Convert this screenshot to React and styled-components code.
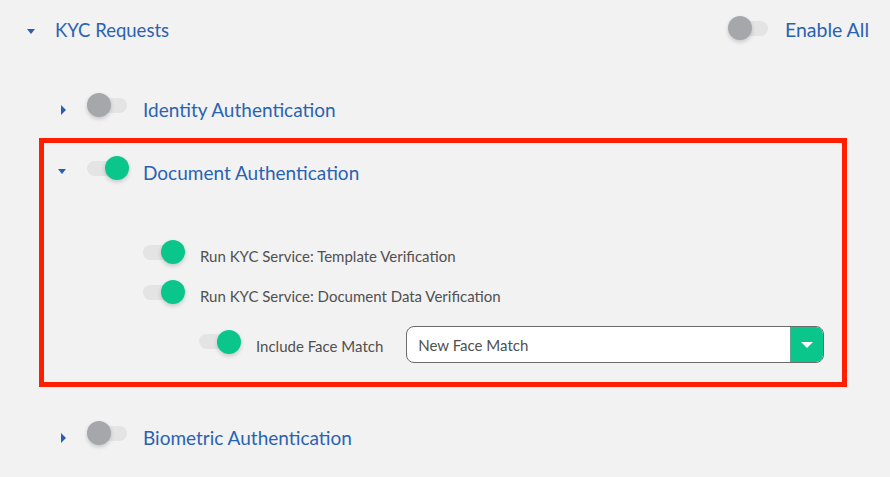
import React from "react";
import styled, { createGlobalStyle } from "styled-components";

const Global = createGlobalStyle`
  html, body { margin: 0; padding: 0; background: #f2f2f2; }
  body { font-family: Lato, "Noto Sans", sans-serif; -webkit-font-smoothing: antialiased; }
`;

const Page = styled.div`
  width: 890px;
  height: 477px;
  background: #f2f2f2;
  display: flex;
  flex-direction: column;
  overflow: hidden;
`;

const Header = styled.div`
  height: 62px;
  margin-bottom: 16px;
  display: flex;
  align-items: center;
  padding: 0 21px 0 27px;
`;

const HeaderTitle = styled.div`
  display: flex;
  align-items: center;
  gap: 20px;
  flex: 1;
`;

const Title = styled.span`
  font-size: ${(p) => p.$size || 19}px;
  color: #2a62b3;
  line-height: 1;
  margin-top: ${(p) => (p.$header ? -2 : 2)}px;
  white-space: nowrap;
`;

const EnableAll = styled.div`
  display: flex;
  align-items: center;
  gap: 17px;
`;

const CaretBox = styled.span`
  width: 10px;
  display: flex;
  justify-content: center;
  align-items: center;
  flex: none;
`;

const CaretDown = styled.span`
  width: 0;
  height: 0;
  border-left: 4.5px solid transparent;
  border-right: 4.5px solid transparent;
  border-top: 5px solid #2a5fb0;
`;

const CaretRight = styled.span`
  width: 0;
  height: 0;
  border-top: 5px solid transparent;
  border-bottom: 5px solid transparent;
  border-left: 5.5px solid #2a5fb0;
  margin-left: 2px;
  margin-top: 4px;
`;

const Track = styled.span`
  position: relative;
  flex: none;
  width: 40px;
  height: 15px;
  border-radius: 8px;
  background: #e4e4e4;
  margin-bottom: 6px;
`;

const Knob = styled.span`
  position: absolute;
  top: -4.5px;
  left: ${(p) => (p.$on ? 18 : 0)}px;
  width: 24px;
  height: 24px;
  border-radius: 50%;
  background: ${(p) => (p.$on ? "#0bc68a" : "#a5a7aa")};
  box-shadow: 0 2px 4px rgba(0, 0, 0, 0.18);
`;

const Toggle = ({ on }) => (
  <Track>
    <Knob $on={on} />
  </Track>
);

const Section = styled.div`
  margin: 0 43px ${(p) => (p.$highlighted ? 19 : 0)}px 39px;
  border: 5px solid ${(p) => (p.$highlighted ? "#ff1e00" : "transparent")};
  padding: 0 18px ${(p) => (p.$highlighted ? 13 : 0)}px 13px;
`;

const SectionRow = styled.div`
  height: ${(p) => p.$h}px;
  display: flex;
  align-items: center;
`;

const ToggleSlot = styled.div`
  display: flex;
  align-items: center;
  margin-left: 20px;
  gap: 16px;
`;

const SubList = styled.div`
  padding: 36px 0 0 86px;
  display: flex;
  flex-direction: column;
`;

const SubRow = styled.div`
  height: ${(p) => p.$h || 40}px;
  margin-top: ${(p) => p.$mt || 0}px;
  margin-left: ${(p) => p.$indent || 0}px;
  display: flex;
  align-items: center;
  gap: 17px;
`;

const Label = styled.span`
  font-size: 15px;
  color: #505050;
  line-height: 1;
  margin-top: 3px;
  white-space: nowrap;
`;

const Select = styled.div`
  flex: 1;
  height: 37px;
  margin-left: 6px;
  box-sizing: border-box;
  border: 1px solid #6b6b6b;
  border-radius: 8px;
  background: #fff;
  display: flex;
  overflow: hidden;
`;

const SelectValue = styled.span`
  flex: 1;
  display: flex;
  align-items: center;
  padding-left: 11px;
  font-size: 15px;
  color: #505050;
`;

const SelectButton = styled.span`
  width: 32px;
  background: #0bc68a;
  display: flex;
  align-items: center;
  justify-content: center;
  border-left: 1px solid #5aa88a;
`;

const WhiteCaret = styled.span`
  width: 0;
  height: 0;
  border-left: 6px solid transparent;
  border-right: 6px solid transparent;
  border-top: 6px solid #fff;
`;

const TopSection = ({ title, on, open, highlighted, rowH, children }) => (
  <Section $highlighted={highlighted}>
    <SectionRow $h={rowH}>
      <CaretBox>{open ? <CaretDown /> : <CaretRight />}</CaretBox>
      <ToggleSlot>
        <Toggle on={on} />
        <Title>{title}</Title>
      </ToggleSlot>
    </SectionRow>
    {children}
  </Section>
);

export default function App() {
  return (
    <Page>
      <Global />
      <Header>
        <HeaderTitle>
          <CaretDown />
          <Title $header $size={18.5}>KYC Requests</Title>
        </HeaderTitle>
        <EnableAll>
          <Toggle on={false} />
          <Title $header $size={19.5}>Enable All</Title>
        </EnableAll>
      </Header>

      <TopSection title="Identity Authentication" rowH={50} />

      <TopSection title="Document Authentication" on open highlighted rowH={56}>
        <SubList>
          <SubRow>
            <Toggle on />
            <Label>Run KYC Service: Template Verification</Label>
          </SubRow>
          <SubRow>
            <Toggle on />
            <Label>Run KYC Service: Document Data Verification</Label>
          </SubRow>
          <SubRow $h={49} $mt={5} $indent={56}>
            <Toggle on />
            <Label>Include Face Match</Label>
            <Select>
              <SelectValue>New Face Match</SelectValue>
              <SelectButton>
                <WhiteCaret />
              </SelectButton>
            </Select>
          </SubRow>
        </SubList>
      </TopSection>

      <TopSection title="Biometric Authentication" rowH={50} />
    </Page>
  );
}
